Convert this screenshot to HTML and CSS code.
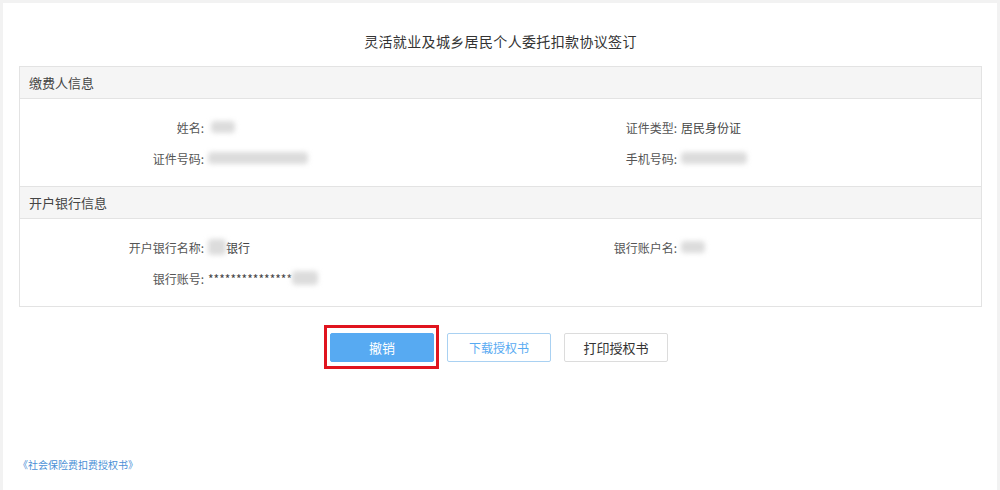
FILE: index.html
```html
<!DOCTYPE html>
<html lang="zh-CN">
<head>
  <meta charset="UTF-8">
  <meta name="viewport" content="width=device-width, initial-scale=1.0">
  <title>灵活就业及城乡居民个人委托扣款协议签订</title>
  <link rel="stylesheet" href="styles.css">
</head>
<body>
  <div class="page">
    <h1 class="page-title">灵活就业及城乡居民个人委托扣款协议签订</h1>

    <div class="panel">
      <div class="panel-head">缴费人信息</div>
      <div class="panel-body">
        <div class="info-grid">
          <div class="label">姓名:</div>
          <div class="value"><span class="blur w-name"></span></div>
          <div class="label">证件类型:</div>
          <div class="value">居民身份证</div>

          <div class="label">证件号码:</div>
          <div class="value"><span class="blur w-id"></span></div>
          <div class="label">手机号码:</div>
          <div class="value"><span class="blur w-phone"></span></div>
        </div>
      </div>

      <div class="panel-head">开户银行信息</div>
      <div class="panel-body">
        <div class="info-grid">
          <div class="label">开户银行名称:</div>
          <div class="value"><span class="blur w-bank"></span>银行</div>
          <div class="label">银行账户名:</div>
          <div class="value"><span class="blur w-holder"></span></div>

          <div class="label">银行账号:</div>
          <div class="value">***************<span class="blur w-tail"></span></div>
          <div class="label"></div>
          <div class="value"></div>
        </div>
      </div>
    </div>

    <div class="actions">
      <span class="mark">
        <button class="btn btn-primary">撤销</button>
      </span>
      <button class="btn btn-outline">下载授权书</button>
      <button class="btn btn-default">打印授权书</button>
    </div>

    <div class="footer-link">
      <a href="#">《社会保险费扣费授权书》</a>
    </div>
  </div>
</body>
</html>
```

FILE: styles.css
```css
html, body {
  height: 100%;
}

body {
  margin: 0;
  padding: 3px 3px 0 3px;
  box-sizing: border-box;
  background: #f2f2f2;
  font-family: "Microsoft YaHei", "Noto Sans CJK SC", "Liberation Sans", sans-serif;
  color: #555;
  font-size: 12px;
}

.page {
  background: #fff;
  height: 100%;
  padding: 26px 15px 0 16px;
  box-sizing: border-box;
  position: relative;
}

.page-title {
  margin: 0 0 13px;
  font-size: 14px;
  font-weight: normal;
  color: #333;
  text-align: center;
  line-height: 24px;
  letter-spacing: 0.35px;
}

.panel {
  border: 1px solid #e3e3e3;
}

.panel-head {
  background: #f5f5f5;
  height: 31px;
  line-height: 31px;
  padding-left: 9px;
  font-size: 13px;
  color: #444;
  border-bottom: 1px solid #e3e3e3;
}

.panel-body {
  padding: 16px 0 16px;
}

.panel-body + .panel-head {
  border-top: 1px solid #e3e3e3;
}

.info-grid {
  display: grid;
  grid-template-columns: 184px 297px 176px 1fr;
  grid-auto-rows: 24px;
  row-gap: 7px;
  align-items: center;
}

.label {
  text-align: right;
  color: #555;
}

.value {
  padding-left: 4px;
  color: #444;
  display: flex;
  align-items: center;
}

.blur {
  display: inline-block;
  height: 12px;
  background: #dcdcdc;
  border-radius: 4px;
  filter: blur(2.5px);
}

.w-name { width: 24px; margin-left: 3px; }
.w-id { width: 100px; }
.w-phone { width: 66px; }
.w-bank { width: 18px; height: 16px; }
.w-holder { width: 24px; }
.w-tail { width: 26px; height: 14px; }

.actions {
  display: flex;
  justify-content: center;
  align-items: center;
  margin-top: 18px;
  padding-right: 9px;
}

.mark {
  border: 3px solid #e0141e;
  padding: 5px 2px 4px 3px;
  margin-right: 8px;
  display: flex;
}

.btn {
  width: 104px;
  height: 29px;
  font-family: inherit;
  font-size: 13px;
  border-radius: 2px;
  cursor: pointer;
  padding: 0;
}

.btn-primary {
  background: #57aaf2;
  border: 1px solid #57aaf2;
  color: #fff;
}

.btn-outline {
  background: #fff;
  border: 1px solid #a9d1f2;
  color: #57aaf2;
  font-size: 12px;
  margin-right: 13px;
}

.btn-default {
  background: #fff;
  border: 1px solid #dcdcdc;
  color: #333;
}

.footer-link {
  position: absolute;
  left: 15px;
  bottom: 18px;
  font-size: 10px;
}

.footer-link a {
  color: #4a8fd6;
  text-decoration: none;
}
```
